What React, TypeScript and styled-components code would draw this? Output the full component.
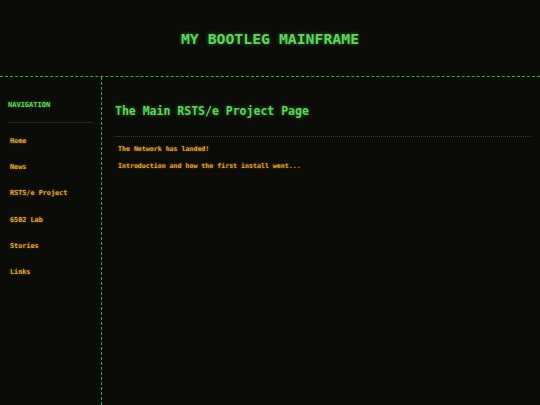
import React from "react";
import styled, { createGlobalStyle } from "styled-components";

const GREEN = "#5fd35f";
const AMBER = "#e0a43a";
const RULE = "#3aa83a";

const Global = createGlobalStyle`
  html, body {
    margin: 0;
    padding: 0;
    background: #0b0b07;
    height: 100%;
  }
  #root { height: 100%; }
  * { box-sizing: border-box; }
`;

const Page = styled.div`
  display: flex;
  flex-direction: column;
  height: 100vh;
  font-family: "DejaVu Sans Mono", "Liberation Mono", monospace;
  background: #0b0b07;
`;

const Header = styled.header`
  height: 77px;
  flex: none;
  display: flex;
  align-items: center;
  justify-content: center;
  border-bottom: 1px dashed ${RULE};
`;

const Title = styled.h1`
  margin: 0;
  font-size: 14.8px;
  font-weight: bold;
  color: ${GREEN};
  text-shadow: 0 0 4px rgba(95, 211, 95, 0.55);
`;

const Body = styled.div`
  flex: 1;
  display: grid;
  grid-template-columns: 102px 1fr;
`;

const Sidebar = styled.nav`
  border-right: 1px dashed ${RULE};
  padding: 24px 8px 0 8px;
`;

const NavTitle = styled.div`
  font-size: 7px;
  font-weight: bold;
  color: ${GREEN};
  text-shadow: 0 0 3px rgba(95, 211, 95, 0.55);
  padding-bottom: 13px;
  border-bottom: 1px dotted #24482a;
`;

const NavList = styled.ul`
  list-style: none;
  margin: 0;
  padding: 14px 0 0 2px;
  display: flex;
  flex-direction: column;
  gap: 17.2px;
`;

const NavLink = styled.a`
  display: block;
  font-size: 6.8px;
  font-weight: bold;
  line-height: 9px;
  color: ${AMBER};
  text-decoration: none;
  text-shadow: 0 0 3px rgba(224, 164, 58, 0.5);
`;

const Main = styled.main`
  padding: 27px 8px 0 13px;
`;

const Heading = styled.h2`
  margin: 0;
  font-size: 11.5px;
  font-weight: bold;
  color: ${GREEN};
  text-shadow: 0 0 4px rgba(95, 211, 95, 0.55);
  padding-bottom: 18px;
  border-bottom: 1px dotted #24482a;
`;

const Para = styled.p`
  margin: 8px 0 0 3px;
  font-size: 6.6px;
  line-height: 8px;
  font-weight: bold;
  color: ${AMBER};
  text-shadow: 0 0 3px rgba(224, 164, 58, 0.5);
  & + & {
    margin-top: 9px;
  }
`;

const links = ["Home", "News", "RSTS/e Project", "6502 Lab", "Stories", "Links"];

export default function App() {
  return (
    <>
      <Global />
      <Page>
        <Header>
          <Title>MY BOOTLEG MAINFRAME</Title>
        </Header>
        <Body>
          <Sidebar>
            <NavTitle>NAVIGATION</NavTitle>
            <NavList>
              {links.map((l) => (
                <li key={l}>
                  <NavLink href="#">{l}</NavLink>
                </li>
              ))}
            </NavList>
          </Sidebar>
          <Main>
            <Heading>The Main RSTS/e Project Page</Heading>
            <Para>The Network has landed!</Para>
            <Para>Introduction and how the first install went...</Para>
          </Main>
        </Body>
      </Page>
    </>
  );
}
